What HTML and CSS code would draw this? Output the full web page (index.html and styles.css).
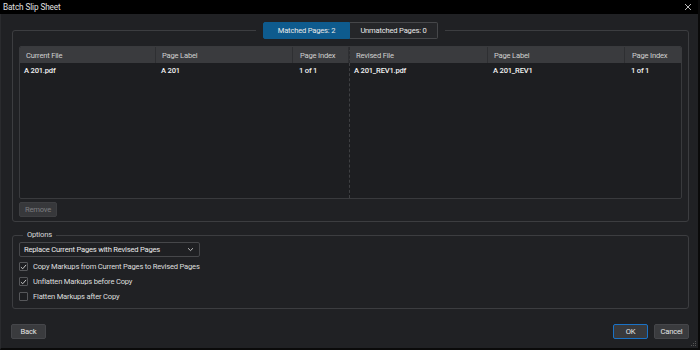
FILE: index.html
```html
<!DOCTYPE html>
<html>
<head>
<meta charset="utf-8">
<link rel="stylesheet" href="styles.css">
</head>
<body>
<div class="window">
  <div class="titlebar">
    <span class="title">Batch Slip Sheet</span>
    <svg class="close" width="8" height="8" viewBox="0 0 8 8"><path d="M1 1L7 7M7 1L1 7" stroke="#cfcfcf" stroke-width="0.9"/></svg>
  </div>
  <div class="content">
    <fieldset class="group pages">
      <legend class="tabs">
        <span class="tab active">Matched Pages: 2</span><span class="tab">Unmatched Pages: 0</span>
      </legend>
      <div class="table">
        <div class="hrow">
          <div class="th c1">Current File</div>
          <div class="th c2">Page Label</div>
          <div class="th c3">Page Index</div>
          <div class="th c4 split">Revised File</div>
          <div class="th c5">Page Label</div>
          <div class="th c6 last">Page Index</div>
        </div>
        <div class="body">
          <div class="col c1"><div class="td">A 201.pdf</div></div>
          <div class="col c2"><div class="td">A 201</div></div>
          <div class="col c3"><div class="td">1 of 1</div></div>
          <div class="col c4 split"><div class="td">A 201_REV1.pdf</div></div>
          <div class="col c5"><div class="td">A 201_REV1</div></div>
          <div class="col c6"><div class="td">1 of 1</div></div>
        </div>
      </div>
      <button class="btn disabled remove">Remove</button>
    </fieldset>
    <fieldset class="group options">
      <legend class="opt-legend">Options</legend>
      <div class="select">
        <span>Replace Current Pages with Revised Pages</span>
        <svg width="7" height="5" viewBox="0 0 7 5"><path d="M1 1.2L3.5 3.6L6 1.2" fill="none" stroke="#c8c8c8" stroke-width="0.9"/></svg>
      </div>
      <label class="check"><span class="box"><svg width="7" height="6" viewBox="0 0 7 6"><path d="M0.9 3.1L2.7 4.8L6.1 0.9" fill="none" stroke="#d8d8d8" stroke-width="0.9"/></svg></span>Copy Markups from Current Pages to Revised Pages</label>
      <label class="check"><span class="box"><svg width="7" height="6" viewBox="0 0 7 6"><path d="M0.9 3.1L2.7 4.8L6.1 0.9" fill="none" stroke="#d8d8d8" stroke-width="0.9"/></svg></span>Unflatten Markups before Copy</label>
      <label class="check"><span class="box"></span>Flatten Markups after Copy</label>
    </fieldset>
    <div class="footer">
      <button class="btn">Back</button>
      <div class="right">
        <button class="btn primary">OK</button>
        <button class="btn">Cancel</button>
      </div>
    </div>
  </div>
  <svg class="grip" width="6" height="6" viewBox="0 0 6 6"><g fill="#555"><rect x="4" y="0" width="1" height="1"/><rect x="2" y="2" width="1" height="1"/><rect x="4" y="2" width="1" height="1"/><rect x="0" y="4" width="1" height="1"/><rect x="2" y="4" width="1" height="1"/><rect x="4" y="4" width="1" height="1"/></g></svg>
</div>
</body>
</html>
```
FILE: styles.css
```css
* { box-sizing: border-box; }
html, body { margin: 0; padding: 0; background: #000; }
body {
  font-family: Roboto, "Liberation Sans", sans-serif;
  font-size: 7.6px;
  letter-spacing: -0.2px;
  color: #e6e6e6;
}
.window {
  position: relative;
  width: 700px;
  height: 350px;
  background: #202124;
  border-left: 1px solid #2a2b2e;
  border-right: 2px solid #0a0a0a;
  border-bottom: 2px solid #0a0a0a;
  display: flex;
  flex-direction: column;
}
.titlebar {
  height: 14px;
  background: #000;
  display: flex;
  align-items: center;
  justify-content: space-between;
  padding: 0 6px 0 3px;
  margin-left: -1px;
}
.title { font-size: 8.2px; color: #e0e0e0; letter-spacing: -0.1px; }
.close { display: block; }
.content {
  flex: 1;
  padding: 8px 9px 0 10px;
  display: flex;
  flex-direction: column;
}
.group {
  margin: 0;
  border: 1px solid #3c3d40;
  border-radius: 3px;
  min-width: 0;
}
.pages {
  padding: 7px 6px 4px 6px;
  margin-left: 1px;
}
.tabs {
  margin: 0 auto;
  padding: 0 7px;
  display: flex;
  height: 17px;
}
.tab {
  display: flex;
  align-items: center;
  justify-content: center;
  height: 17px;
  color: #e8e8e8;
  border: 1px solid #46474a;
  background: #252629;
}
.tab.active {
  width: 87px;
  background: #0e5b8e;
  border-color: #0e5b8e;
  border-radius: 2px 0 0 2px;
}
.tab:not(.active) {
  width: 88px;
  border-left: none;
  border-radius: 0 2px 2px 0;
}
.table {
  height: 153px;
  border: 1px solid #393a3d;
  border-radius: 2px;
  background: #1d1e21;
  display: flex;
  flex-direction: column;
  overflow: hidden;
}
.hrow {
  display: grid;
  grid-template-columns: 136px 137px 56px 139px 137px 56px;
  height: 16px;
  background: #3a3b3e;
}
.th {
  display: flex;
  align-items: center;
  padding-left: 6px;
  color: #d0d0d0;
  border-right: 1px solid #2e2f32;
}
.th.last { border-right: none; }
.th.c3, .th.c6 { padding-left: 7px; }
.body {
  flex: 1;
  display: grid;
  grid-template-columns: 136px 137px 56px 139px 137px 56px;
}
.col { min-width: 0; }
.td {
  height: 14px;
  display: flex;
  align-items: center;
  padding-left: 4px;
  color: #f2f2f2;
  font-weight: 500;
  background: #1d1e21;
}
.col.c2 .td, .col.c5 .td { padding-left: 5px; }
.col.c3 .td, .col.c6 .td { padding-left: 6px; }
.split {
  border-left: 1px dashed #3f4043;
}
.th.split { border-left: 1px dashed #2a2b2e; }
.btn {
  font-family: inherit;
  font-size: 7.6px;
  letter-spacing: -0.2px;
  color: #e4e4e4;
  background: #3a3b3e;
  border: 1px solid #45464a;
  border-radius: 2px;
  height: 15px;
  padding: 0;
  width: 35px;
  display: flex;
  align-items: center;
  justify-content: center;
}
.remove {
  margin-top: 3px;
  width: 38px;
}
.btn.disabled { color: #7c7d80; background: #37383b; border-color: #3e3f42; }
.options {
  margin-top: 9px;
  margin-left: 1px;
  padding: 0 6px 3px 6px;
  height: 78px;
}
.opt-legend {
  margin-left: 4px;
  padding: 0 4px 0 4px;
  color: #d8d8d8;
  line-height: 8px;
}
.select {
  margin-top: 3px;
  width: 181px;
  height: 15px;
  border: 1px solid #46474a;
  border-radius: 2px;
  background: #1f2023;
  display: flex;
  align-items: center;
  justify-content: space-between;
  padding: 0 5px 0 4px;
  color: #eaeaea;
}
.select svg { display: block; }
.check {
  display: flex;
  align-items: center;
  height: 15px;
  color: #dedede;
}
.check:first-of-type { margin-top: 2px; }
.box {
  width: 9px;
  height: 9px;
  border: 1px solid #56575a;
  border-radius: 1px;
  background: #1d1e21;
  margin-right: 5px;
  display: flex;
  align-items: center;
  justify-content: center;
}
.box svg { display: block; }
.footer {
  margin-top: 15px;
  display: flex;
  justify-content: space-between;
}
.right { display: flex; gap: 6px; }
.primary {
  border: 1px solid #1a72c6;
  background: #38393c;
}
.grip {
  position: absolute;
  right: 1px;
  bottom: 1px;
}
```
